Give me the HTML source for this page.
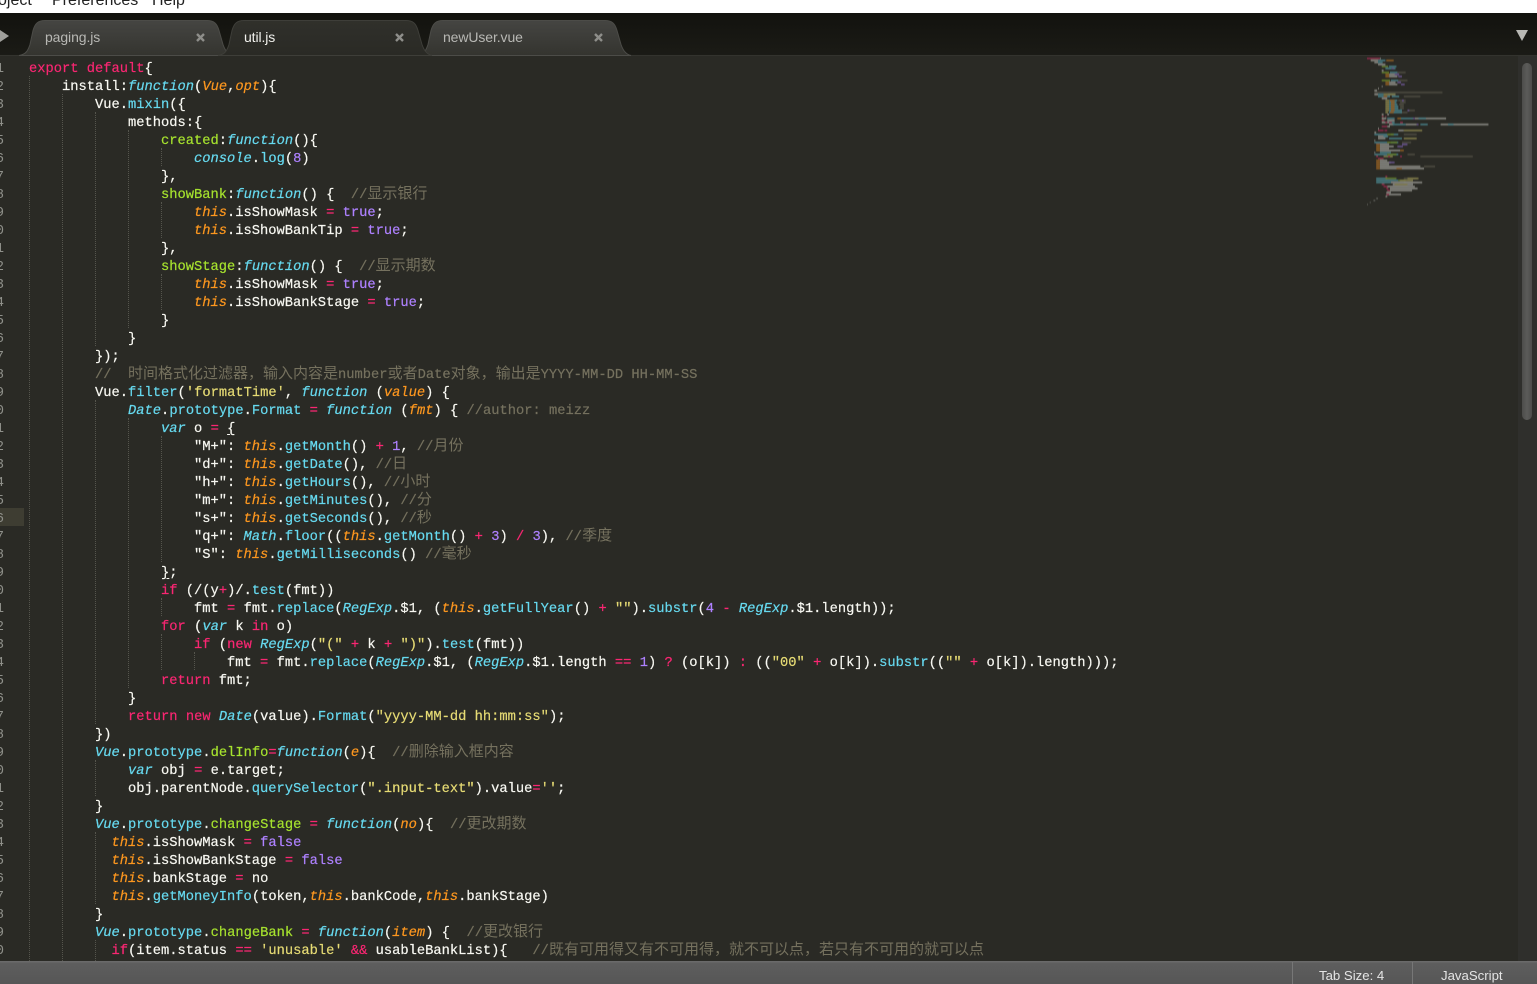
<!DOCTYPE html>
<html><head><meta charset="utf-8"><style>
html,body{margin:0;padding:0;width:1537px;height:984px;overflow:hidden;background:#2a2a25}
body{position:relative;font-family:"Liberation Sans",sans-serif}
.menu{position:absolute;left:0;top:0;width:1537px;height:13px;background:#fff;overflow:hidden;border-bottom:0;font-size:16px;color:#222}
.menu span{position:absolute;top:-10px;line-height:22px;white-space:pre}
.tabbar{position:absolute;left:0;top:13px;width:1537px;height:43px;background:linear-gradient(#12120e,#1b1b16)}
.tabline{position:absolute;left:0;top:55px;width:1537px;height:1px;background:#33332e}
.tabtxt{position:absolute;top:28px;line-height:18px;font-size:14px;letter-spacing:-.1px;color:#c8c8c4;white-space:pre}
#ed{position:absolute;left:0;top:56px;width:1518px;height:905px;background:#2a2a25;overflow:hidden}
#code{position:absolute;left:29px;top:5px;font:13.75px/18px "Liberation Mono","Noto Sans CJK SC",monospace;color:#f8f8f2;white-space:normal;-webkit-text-stroke:.2px}
#code div{height:18px;white-space:pre}
#nums{position:absolute;left:-16px;top:5px;width:20px;text-align:right;font:13.75px/18px "Liberation Mono",monospace;color:#8f908a;white-space:pre}
.hl{position:absolute;left:0;top:452px;width:24px;height:18px;background:#3e3d32}
.g{position:absolute;width:0;border-left:1px dotted #55554d}
i{font-style:normal}
.k{color:#f92672}.f{color:#66d9ef;font-style:italic}.n{color:#66d9ef}.h{color:#a6e22e}
.t{color:#fd971f;font-style:italic}.p{color:#ae81ff}.y{color:#e6db74}.c{color:#75715e}
.z{font:15px/0 "Noto Sans CJK SC",sans-serif;-webkit-text-stroke:0}
u{text-underline-offset:2px}
.sb{position:absolute;left:1518px;top:56px;width:19px;height:905px;background:#2f2f2c}
.th{position:absolute;left:1522px;top:63px;width:10px;height:357px;border-radius:5px;background:linear-gradient(90deg,#4c4c4a,#5c5c5a 50%,#4c4c4a)}
.st{position:absolute;left:0;top:961px;width:1537px;height:23px;background:linear-gradient(#6a6a6a 0,#6a6a6a 1px,#5e5e5e 2px,#565656);color:#e4e4e4;font-size:13.2px}
.st span{position:absolute;top:6px;line-height:18px}
.st b{position:absolute;top:1px;width:1px;height:22px;background:#777}
svg{position:absolute;left:0;top:0}
</style></head><body>
<div class="menu"><span style="left:-2px">oject</span><span style="left:52px">Preferences</span><span style="left:152px">Help</span></div>
<div class="tabbar"></div>
<div class="tabline"></div>
<svg width="1537" height="60" style="z-index:2">
<defs><linearGradient id="ti" x1="0" y1="0" x2="0" y2="1"><stop offset="0" stop-color="#454542"/><stop offset="1" stop-color="#34342f"/></linearGradient>
<linearGradient id="ta" x1="0" y1="0" x2="0" y2="1"><stop offset="0" stop-color="#30302b"/><stop offset="1" stop-color="#2a2a25"/></linearGradient>
<path id="tp" d="M0 35C7 34 9 30 11 24L14 10C16 3 19 0 26 0L188 0C195 0 198 3 200 10L204 24C206 30 209 34 214 35Z"/></defs>
<use href="#tp" transform="translate(19,20.5)" fill="url(#ti)" stroke="#4c4c48"/>
<use href="#tp" transform="translate(417,20.5)" fill="url(#ti)" stroke="#4c4c48"/>
<use href="#tp" transform="translate(218,20.5)" fill="url(#ta)" stroke="#3e3e39"/>
<path d="M0 30L9 36L0 42Z" fill="#a0a09c"/>
<path d="M1516 30H1528L1522 41Z" fill="#b8b8b4"/>
<g stroke="#8e8e8a" stroke-width="2.4" fill="none"><path d="M197 34l7 7M204 34l-7 7"/><path d="M396 34l7 7M403 34l-7 7"/><path d="M595 34l7 7M602 34l-7 7"/></g>
</svg>
<div class="tabtxt" style="left:45px;z-index:3;color:#b8b8b4">paging.js</div>
<div class="tabtxt" style="left:244px;z-index:3;color:#f0f0ec">util.js</div>
<div class="tabtxt" style="left:443px;z-index:3;color:#b8b8b4">newUser.vue</div>
<div id="ed">
<div class="hl"></div>
<div id="nums">1
2
3
4
5
6
7
8
9
10
11
12
13
14
15
16
17
18
19
20
21
22
23
24
25
26
27
28
29
30
31
32
33
34
35
36
37
38
39
40
41
42
43
44
45
46
47
48
49
50</div>
<div class="g" style="left:29px;top:20px;height:885px"></div>
<div class="g" style="left:62px;top:38px;height:867px"></div>
<div class="g" style="left:95px;top:56px;height:234px"></div>
<div class="g" style="left:95px;top:344px;height:324px"></div>
<div class="g" style="left:95px;top:704px;height:36px"></div>
<div class="g" style="left:95px;top:776px;height:72px"></div>
<div class="g" style="left:95px;top:884px;height:21px"></div>
<div class="g" style="left:128px;top:74px;height:198px"></div>
<div class="g" style="left:128px;top:362px;height:270px"></div>
<div class="g" style="left:161px;top:92px;height:18px"></div>
<div class="g" style="left:161px;top:146px;height:36px"></div>
<div class="g" style="left:161px;top:218px;height:36px"></div>
<div class="g" style="left:161px;top:380px;height:126px"></div>
<div class="g" style="left:161px;top:542px;height:18px"></div>
<div class="g" style="left:161px;top:578px;height:36px"></div>
<div class="g" style="left:194px;top:596px;height:18px"></div>
<div id="code">
<div><i class=k>export default</i>{</div>
<div>    install:<i class=f>function</i>(<i class=t>Vue</i>,<i class=t>opt</i>){</div>
<div>        Vue.<i class=n>mixin</i>({</div>
<div>            methods:{</div>
<div>                <i class=h>created</i>:<i class=f>function</i>(){</div>
<div>                    <i class=f>console</i>.<i class=n>log</i>(<i class=p>8</i>)</div>
<div>                },</div>
<div>                <i class=h>showBank</i>:<i class=f>function</i>() {  <i class=c>//<i class=z>显示银行</i></i></div>
<div>                    <i class=t>this</i>.isShowMask <i class=k>=</i> <i class=p>true</i>;</div>
<div>                    <i class=t>this</i>.isShowBankTip <i class=k>=</i> <i class=p>true</i>;</div>
<div>                },</div>
<div>                <i class=h>showStage</i>:<i class=f>function</i>() {  <i class=c>//<i class=z>显示期数</i></i></div>
<div>                    <i class=t>this</i>.isShowMask <i class=k>=</i> <i class=p>true</i>;</div>
<div>                    <i class=t>this</i>.isShowBankStage <i class=k>=</i> <i class=p>true</i>;</div>
<div>                }</div>
<div>            }</div>
<div>        });</div>
<div>        <i class=c>//  <i class=z>时间格式化过滤器，输入内容是</i>number<i class=z>或者</i>Date<i class=z>对象，输出是</i>YYYY-MM-DD HH-MM-SS</i></div>
<div>        Vue.<i class=n>filter</i>(<i class=y>'formatTime'</i>, <i class=f>function</i> (<i class=t>value</i>) {</div>
<div>            <i class=f>Date</i>.<i class=n>prototype</i>.<i class=n>Format</i> <i class=k>=</i> <i class=f>function</i> (<i class=t>fmt</i>) { <i class=c>//author: meizz</i></div>
<div>                <i class=f>var</i> o <i class=k>=</i> <u>{</u></div>
<div>                    "M+": <i class=t>this</i>.<i class=n>getMonth</i>() <i class=k>+</i> <i class=p>1</i>, <i class=c>//<i class=z>月份</i></i></div>
<div>                    "d+": <i class=t>this</i>.<i class=n>getDate</i>(), <i class=c>//<i class=z>日</i></i></div>
<div>                    "h+": <i class=t>this</i>.<i class=n>getHours</i>(), <i class=c>//<i class=z>小时</i></i></div>
<div>                    "m+": <i class=t>this</i>.<i class=n>getMinutes</i>(), <i class=c>//<i class=z>分</i></i></div>
<div>                    "s+": <i class=t>this</i>.<i class=n>getSeconds</i>(), <i class=c>//<i class=z>秒</i></i></div>
<div>                    "q+": <i class=f>Math</i>.<i class=n>floor</i>((<i class=t>this</i>.<i class=n>getMonth</i>() <i class=k>+</i> <i class=p>3</i>) <i class=k>/</i> <i class=p>3</i>), <i class=c>//<i class=z>季度</i></i></div>
<div>                    "S": <i class=t>this</i>.<i class=n>getMilliseconds</i>() <i class=c>//<i class=z>毫秒</i></i></div>
<div>                <u>}</u>;</div>
<div>                <i class=k>if</i> (/(y<i class=k>+</i>)/.<i class=n>test</i>(fmt))</div>
<div>                    fmt <i class=k>=</i> fmt.<i class=n>replace</i>(<i class=f>RegExp</i>.$1, (<i class=t>this</i>.<i class=n>getFullYear</i>() <i class=k>+</i> <i class=y>""</i>).<i class=n>substr</i>(<i class=p>4</i> <i class=k>-</i> <i class=f>RegExp</i>.$1.length));</div>
<div>                <i class=k>for</i> (<i class=f>var</i> k <i class=k>in</i> o)</div>
<div>                    <i class=k>if</i> (<i class=k>new</i> <i class=f>RegExp</i>(<i class=y>"("</i> <i class=k>+</i> k <i class=k>+</i> <i class=y>")"</i>).<i class=n>test</i>(fmt))</div>
<div>                        fmt <i class=k>=</i> fmt.<i class=n>replace</i>(<i class=f>RegExp</i>.$1, (<i class=f>RegExp</i>.$1.length <i class=k>==</i> <i class=p>1</i>) <i class=k>?</i> (o[k]) <i class=k>:</i> ((<i class=y>"00"</i> <i class=k>+</i> o[k]).<i class=n>substr</i>((<i class=y>""</i> <i class=k>+</i> o[k]).length)));</div>
<div>                <i class=k>return</i> fmt;</div>
<div>            }</div>
<div>            <i class=k>return</i> <i class=k>new</i> <i class=f>Date</i>(value).<i class=n>Format</i>(<i class=y>"yyyy-MM-dd hh:mm:ss"</i>);</div>
<div>        })</div>
<div>        <i class=f>Vue</i>.<i class=n>prototype</i>.<i class=h>delInfo</i><i class=k>=</i><i class=f>function</i>(<i class=t>e</i>){  <i class=c>//<i class=z>删除输入框内容</i></i></div>
<div>            <i class=f>var</i> obj <i class=k>=</i> e.target;</div>
<div>            obj.parentNode.<i class=n>querySelector</i>(<i class=y>".input-text"</i>).value<i class=k>=</i><i class=y>''</i>;</div>
<div>        }</div>
<div>        <i class=f>Vue</i>.<i class=n>prototype</i>.<i class=h>changeStage</i> <i class=k>=</i> <i class=f>function</i>(<i class=t>no</i>){  <i class=c>//<i class=z>更改期数</i></i></div>
<div>          <i class=t>this</i>.isShowMask <i class=k>=</i> <i class=p>false</i></div>
<div>          <i class=t>this</i>.isShowBankStage <i class=k>=</i> <i class=p>false</i></div>
<div>          <i class=t>this</i>.bankStage <i class=k>=</i> no</div>
<div>          <i class=t>this</i>.<i class=n>getMoneyInfo</i>(token,<i class=t>this</i>.bankCode,<i class=t>this</i>.bankStage)</div>
<div>        }</div>
<div>        <i class=f>Vue</i>.<i class=n>prototype</i>.<i class=h>changeBank</i> <i class=k>=</i> <i class=f>function</i>(<i class=t>item</i>) {  <i class=c>//<i class=z>更改银行</i></i></div>
<div>          <i class=k>if</i>(item.status <i class=k>==</i> <i class=y>'unusable'</i> <i class=k>&amp;&amp;</i> usableBankList){   <i class=c>//<i class=z>既有可用得又有不可用得，就不可以点，若只有不可用的就可以点</i></i></div>
</div>
</div>
<svg width="1537" height="984" style="z-index:1;pointer-events:none">
<defs><filter id="bl" x="-5%" y="-5%" width="110%" height="110%"><feGaussianBlur stdDeviation="0.35"/></filter></defs>
<g transform="translate(1367,58.5) scale(.92,2)" fill="none" stroke-width=".7" opacity=".5" filter="url(#bl)">
<path stroke="#75715e" d="M32 7h10M34 11h10M8 17h74M40 19h18M34 21h8M36 22h6M35 23h5M36 24h4M36 25h4M44 26h8M36 27h8M40 38h14M38 42h10M44 48h8M58 49h57M62 54h12M40 60h14M40 62h16"/>
<path stroke="#f8f8f2" d="M14 0h1M4 1h8M8 2h4M12 3h8M16 6h2M24 8h7M24 9h9M24 12h7M24 13h9M16 14h1M12 15h1M8 16h3M8 18h4M16 20h6M22 28h2M16 28h2M16 30h5M52 30h34M22 31h8M16 32h8M24 33h5M42 33h12M80 33h52M22 34h3M12 35h1M34 36h6M8 37h2M12 39h10M12 40h8M8 41h1M14 43h10M14 44h15M14 45h10M14 46h22M8 47h1M14 51h8M14 52h12M14 53h10M14 54h44M14 55h48M26 62h34M28 63h22M22 64h30M25 65h30M25 66h24M21 67h5M21 68h16M20 69h2"/>
<path stroke="#66d9ef" d="M12 1h8M12 2h5M20 5h7M28 5h3M24 4h8M25 7h8M26 11h8M12 18h6M23 18h8M12 19h13M27 19h8M24 21h9M24 22h8M24 23h9M24 24h10M24 25h10M24 26h14M24 27h14M22 30h8M36 30h14M56 30h8M24 32h6M28 33h8M36 33h6M58 33h8M88 33h6M8 38h14M26 38h8M18 39h5M24 40h14M8 42h14M26 42h8M14 47h12M8 48h14M26 48h8M10 60h12M10 61h24M10 62h16"/>
<path stroke="#a6e22e" d="M16 4h7M16 7h8M16 11h9M22 38h7M22 42h11M22 48h10M20 60h12M34 61h8"/>
<path stroke="#e6db74" d="M18 18h13M20 21h4M20 22h4M20 23h4M20 24h4M20 25h4M20 26h4M20 27h3M40 36h20M40 40h14M18 49h10M44 60h12M36 61h14M30 63h14"/>
<path stroke="#fd971f" d="M21 1h8M20 8h4M20 9h4M20 12h4M20 13h4M25 21h5M26 22h4M26 23h4M26 24h4M26 25h4M26 26h4M25 27h4M33 30h4M18 19h4M10 43h4M10 44h4M10 45h4M10 46h4M36 46h4M10 51h4M10 52h4M10 53h4M10 54h4M10 55h4M32 55h6"/>
<path stroke="#ae81ff" d="M30 8h5M34 9h4M33 12h4M37 13h4M27 5h2M38 21h2M44 26h2M38 43h6M33 44h6M50 30h2M54 33h2M24 52h6"/>
<path stroke="#f92672" d="M0 0h14M16 29h2M20 29h1M16 31h3M20 32h2M24 32h3M36 32h3M16 34h6M12 36h6M19 36h3M10 49h2M23 49h2M36 49h2M12 50h6M20 59h2M16 63h3M18 64h4M21 65h2M22 66h3M21 68h3"/>
<path stroke="#8f908a" d="M10 70h2M20 69h1M7 71h2M3 72h1M0 73h1"/>
</g>
</svg>
<div class="sb"></div>
<div class="th"></div>
<div class="st"><b style="left:1292px"></b><b style="left:1412px"></b><span style="left:1319px">Tab Size: 4</span><span style="left:1441px">JavaScript</span></div>
</body></html>
